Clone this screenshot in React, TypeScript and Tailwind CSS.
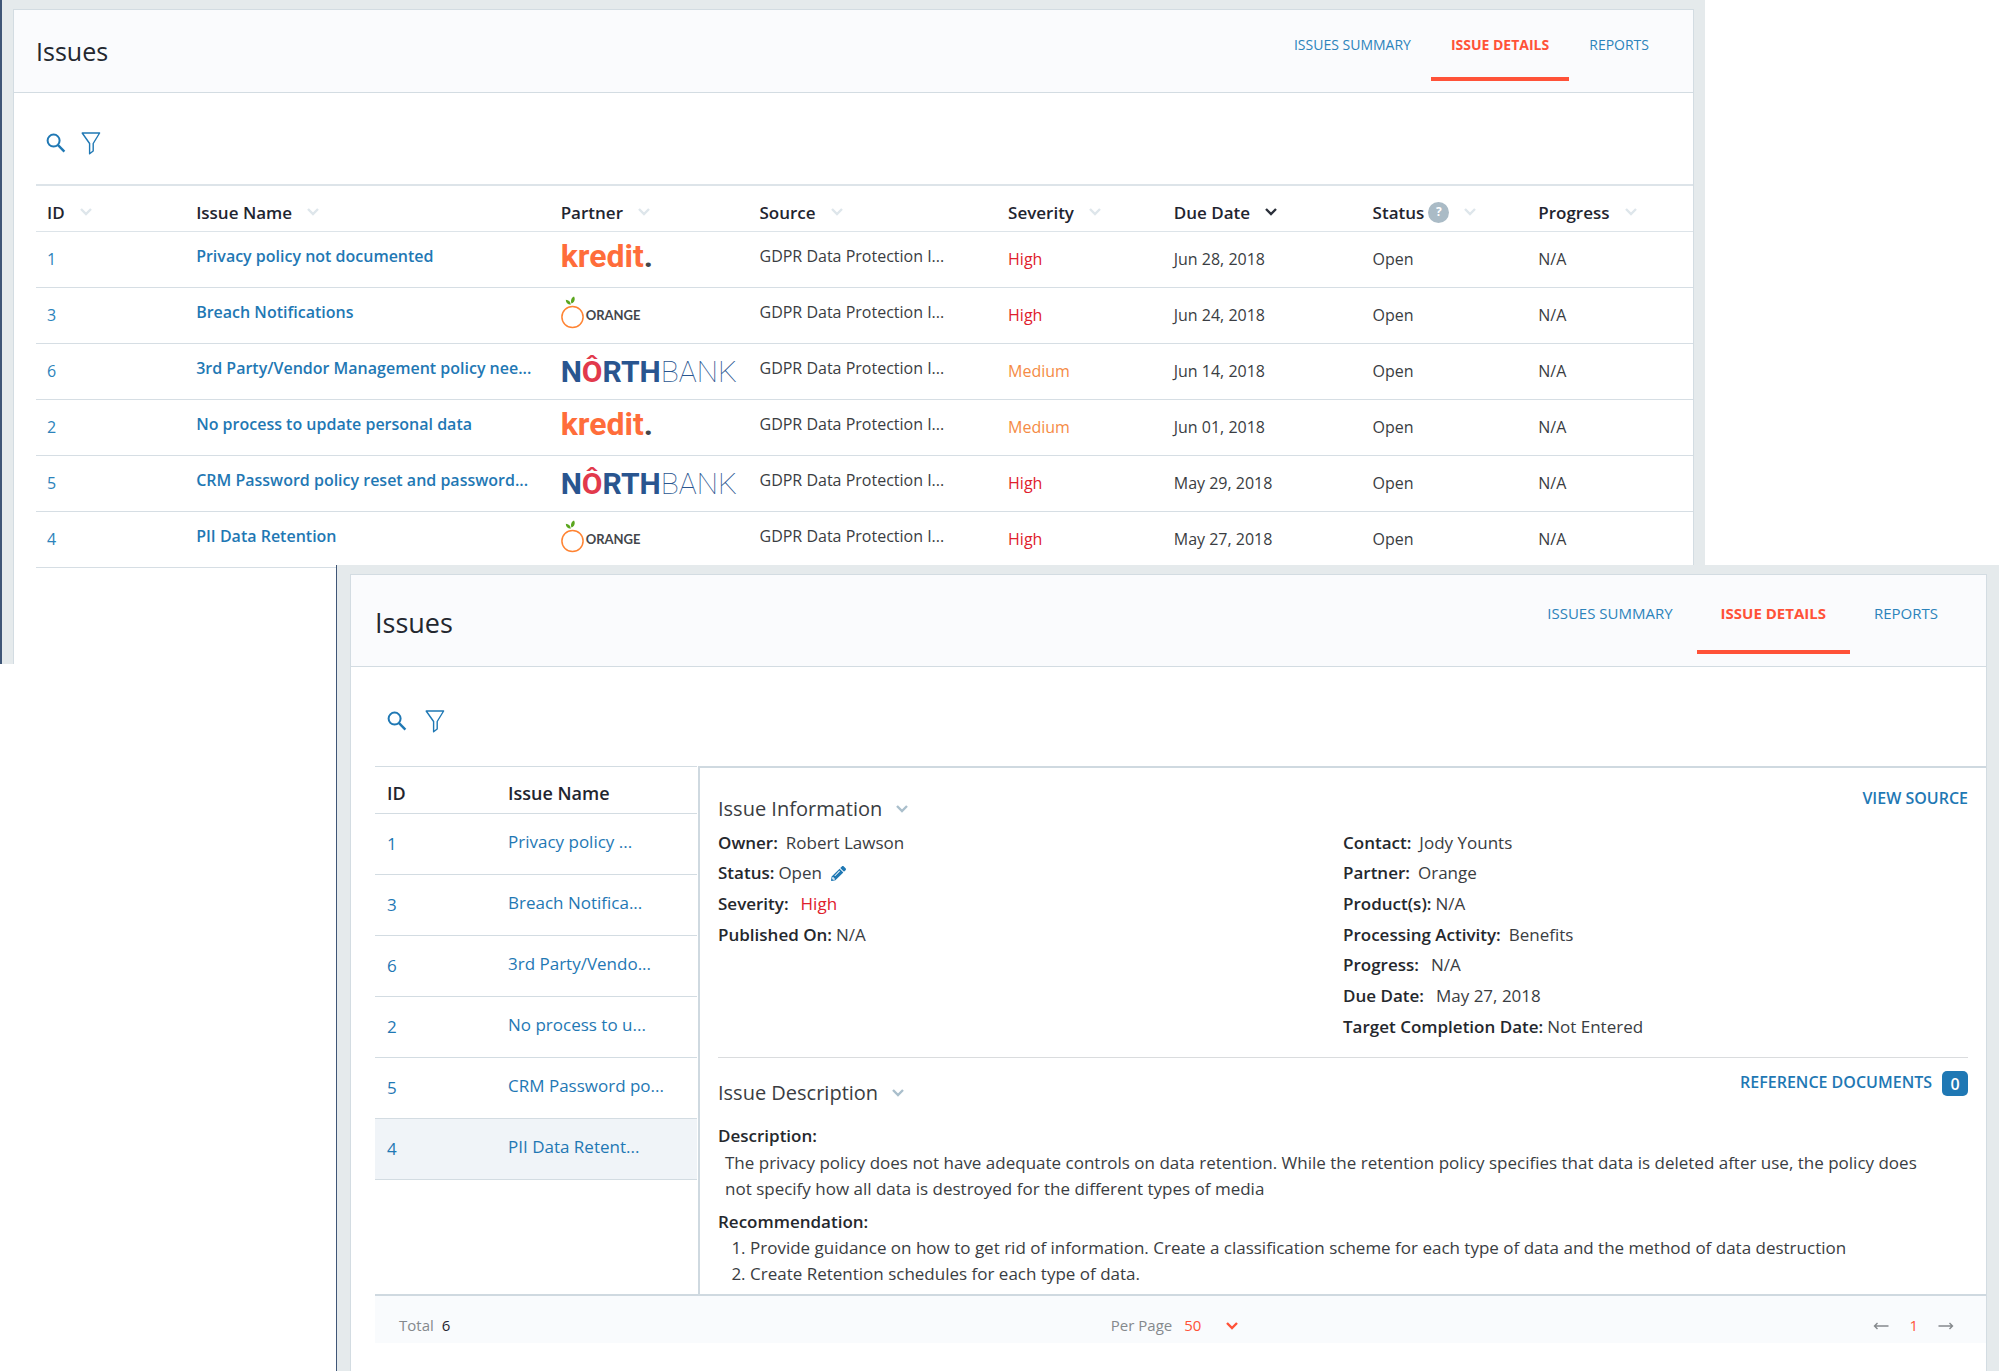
import { FaPencilAlt } from "react-icons/fa";

type Partner = "kredit" | "orange" | "northbank";

const issues: { id: number; name: string; short: string; partner: Partner; severity: string; due: string }[] = [
    { id: 1, name: "Privacy policy not documented", short: "Privacy policy ...", partner: "kredit", severity: "High", due: "Jun 28, 2018" },
    { id: 3, name: "Breach Notifications", short: "Breach Notifica...", partner: "orange", severity: "High", due: "Jun 24, 2018" },
    { id: 6, name: "3rd Party/Vendor Management policy nee...", short: "3rd Party/Vendo...", partner: "northbank", severity: "Medium", due: "Jun 14, 2018" },
    { id: 2, name: "No process to update personal data", short: "No process to u...", partner: "kredit", severity: "Medium", due: "Jun 01, 2018" },
    { id: 5, name: "CRM Password policy reset and password...", short: "CRM Password po...", partner: "northbank", severity: "High", due: "May 29, 2018" },
    { id: 4, name: "PII Data Retention", short: "PII Data Retent...", partner: "orange", severity: "High", due: "May 27, 2018" },
];

const columns = [
    { label: "ID", width: "w-[9%]" },
    { label: "Issue Name", width: "w-[22%]" },
    { label: "Partner", width: "w-[12%]" },
    { label: "Source", width: "w-[15%]" },
    { label: "Severity", width: "w-[10%]" },
    { label: "Due Date", width: "w-[12%]", active: true },
    { label: "Status", width: "w-[10%]", help: true },
    { label: "Progress", width: "w-[10%]" },
];

const leftFields = [
    { label: "Owner:", value: "Robert Lawson", gap: "ml-2" },
    { label: "Status:", value: "Open", gap: "ml-1", editable: true },
    { label: "Severity:", value: "High", gap: "ml-3 text-[#e0202c]" },
    { label: "Published On:", value: "N/A", gap: "ml-1" },
];

const rightFields = [
    { label: "Contact:", value: "Jody Younts", gap: "ml-2" },
    { label: "Partner:", value: "Orange", gap: "ml-2" },
    { label: "Product(s):", value: "N/A", gap: "ml-1" },
    { label: "Processing Activity:", value: "Benefits", gap: "ml-2" },
    { label: "Progress:", value: "N/A", gap: "ml-3" },
    { label: "Due Date:", value: "May 27, 2018", gap: "ml-3" },
    { label: "Target Completion Date:", value: "Not Entered", gap: "ml-1" },
];

function Chevron({ className }: { className: string }) {
    return (
        <svg viewBox="0 0 12 8" className={className} fill="none" stroke="currentColor" strokeWidth="2.4">
            <path d="M1 1l5 5 5-5" />
        </svg>
    );
}

function SearchIcon() {
    return (
        <svg viewBox="0 0 20 20" className="size-5" fill="none" stroke="currentColor">
            <circle cx="7.6" cy="7.6" r="6" strokeWidth="2" />
            <path d="M11.8 11.8l6.6 6.8" strokeWidth="2.4" />
        </svg>
    );
}

function FunnelIcon() {
    return (
        <svg viewBox="0 0 20 24" className="h-6 w-5" fill="none" stroke="currentColor" strokeWidth="1.4" strokeLinejoin="round">
            <path d="M1.2 2h17.4l-6.4 10.5V20l-3.6 2.8V12.5z" />
        </svg>
    );
}

function Arrow({ flip = false }: { flip?: boolean }) {
    return (
        <svg viewBox="0 0 16 10" className={flip ? "h-[10px] w-4 rotate-180" : "h-[10px] w-4"} fill="none" stroke="currentColor" strokeWidth="1.4">
            <path d="M15.5 5H1.5M4.5 2l-3 3 3 3" />
        </svg>
    );
}

function PartnerLogo({ name }: { name: Partner }) {
    if (name === "kredit") {
        return (
            <span className="block font-[Roboto,sans-serif] text-[32px] leading-[40px] font-bold text-[#ff6d3a]">
                kredit<span className="text-[#43464b]">.</span>
            </span>
        );
    }
    if (name === "orange") {
        return (
            <span className="flex items-end gap-[2px]">
                <svg viewBox="0 0 23 33" className="h-[33px] w-[23px]" fill="none">
                    <circle cx="11.5" cy="21" r="10.6" stroke="#ff8433" strokeWidth="1.5" />
                    <path d="M9.7 8.8C6.5 8.6 4.8 6.7 4.8 3.8c3 .2 5 2 4.900 5z" fill="#5aa61e" />
                    <path d="M10.5 7.5c-1.3-3 .1-6 2.5-7 1.5 2.6.6 5.8-2.5 7z" fill="#5aa61e" />
                </svg>
                <span className="pb-[6px] font-[Lato,sans-serif] text-[13px] leading-4 font-bold text-[#43464b]">ORANGE</span>
            </span>
        );
    }
    return (
        <span className="block pt-2 font-[Roboto,sans-serif] text-[30px] leading-[40px] font-bold text-[#29558f]">
            N<span className="text-[#e23a4c]">Ô</span>RTH<span className="font-thin">BANK</span>
        </span>
    );
}

function Tabs({ large = false }: { large?: boolean }) {
    const box = large ? "h-[79px] px-6 pt-[26px] text-[15px] leading-6" : "h-[71px] px-5 pt-[23px] text-[14px] leading-6";
    return (
        <nav className="mr-6 flex">
            <a href="#summary" className={`${box} text-[#2c83bb]`}>ISSUES SUMMARY</a>
            <a href="#details" aria-current="page" className={`${box} border-b-4 border-[#ff5238] font-bold text-[#ff5238]`}>ISSUE DETAILS</a>
            <a href="#reports" className={`${box} text-[#2c83bb]`}>REPORTS</a>
        </nav>
    );
}

function Toolbar({ className }: { className: string }) {
    return (
        <div className={className}>
            <button type="button" aria-label="Search"><SearchIcon /></button>
            <button type="button" aria-label="Filter"><FunnelIcon /></button>
        </div>
    );
}

function Field({ label, value, gap, editable }: { label: string; value: string; gap: string; editable?: boolean }) {
    return (
        <div className="flex items-center">
            <dt className="font-semibold text-[#25282d]">{label}</dt>
            <dd className={gap}>{value}</dd>
            {editable && (
                <button type="button" aria-label="Edit status" className="ml-[9px] text-[#1f78b4]">
                    <FaPencilAlt className="size-[15px]" />
                </button>
            )}
        </div>
    );
}

function IssueListWindow() {
    return (
        <section className="mr-[294px] h-[664px] border-l-2 border-[#3f5677] bg-[#e5eaec] pt-[9px] pr-[11px] pl-[11px]">
            <div className="h-full border border-b-0 border-[#d3dce2] bg-white">
                <header className="flex h-[83px] items-start justify-between border-b border-[#d3dce2] bg-[#fafbfd]">
                    <h1 className="pt-[25px] pl-[22px] text-[25px] leading-8 text-[#23272f]">Issues</h1>
                    <Tabs />
                </header>
                <Toolbar className="flex h-[91px] items-center gap-[15px] pt-2 pl-8 text-[#1f78b4]" />
                <div className="pl-[22px]">
                    <table className="w-full table-fixed text-left text-[16px]">
                        <thead>
                            <tr className="h-[46px] border-t-2 border-b border-[#dde4e9]">
                                {columns.map((c) => (
                                    <th key={c.label} className={`${c.width} pt-2 pl-[11px] text-[17px] font-semibold text-[#1f2530]`}>
                                        <button type="button" className="flex items-center">
                                            {c.label}
                                            {c.help && (
                                                <span className="ml-1 flex size-[21px] items-center justify-center rounded-full bg-[#aabbc6] text-[12px] font-bold text-white">?</span>
                                            )}
                                            <Chevron className={c.active ? "ml-[15px] h-2 w-3 text-[#2b303a]" : "ml-[15px] h-2 w-3 text-[#dee6eb]"} />
                                        </button>
                                    </th>
                                ))}
                            </tr>
                        </thead>
                        <tbody>
                            {issues.map((issue) => (
                                <tr key={issue.id} className="h-14 border-b border-[#d6dee4]">
                                    <td className="pl-[11px]"><a href={`#issue-${issue.id}`} className="text-[#2c83bb]">{issue.id}</a></td>
                                    <td className="pb-[6px] pl-[11px] whitespace-nowrap"><a href={`#issue-${issue.id}`} className="font-semibold text-[#1f78b4]">{issue.name}</a></td>
                                    <td className="pb-[6px] pl-[11px] whitespace-nowrap"><PartnerLogo name={issue.partner} /></td>
                                    <td className="pb-[6px] pl-[11px] whitespace-nowrap">GDPR Data Protection I...</td>
                                    <td className={issue.severity === "High" ? "pl-[11px] text-[#e0202c]" : "pl-[11px] text-[#f58b45]"}>{issue.severity}</td>
                                    <td className="pl-[11px]">{issue.due}</td>
                                    <td className="pl-[11px]">Open</td>
                                    <td className="pl-[11px]">N/A</td>
                                </tr>
                            ))}
                        </tbody>
                    </table>
                </div>
            </div>
        </section>
    );
}

function IssueDetailWindow() {
    return (
        <section className="relative -mt-[99px] ml-[336px] border-l border-[#3f5677] bg-[#e5eaec] pt-[9px] pr-3 pl-[13px] text-[17px]">
            <div className="min-h-[797px] border border-b-0 border-[#d3dce2] bg-white">
                <header className="flex h-[92px] items-start justify-between border-b border-[#d3dce2] bg-[#fafbfd]">
                    <h1 className="pt-8 pl-6 text-[27px] leading-8 text-[#23272f]">Issues</h1>
                    <Tabs large />
                </header>
                <Toolbar className="flex h-[99px] items-center gap-[18px] pt-2 pl-9 text-[#1f78b4]" />

                <div className="flex h-[528px] gap-px overflow-hidden pl-6">
                    <div className="w-[322px] shrink-0">
                        <table className="w-full table-fixed text-left">
                            <thead>
                                <tr className="h-[47px] border-y border-[#d3dce2] text-[18px] text-[#1f2530]">
                                    <th className="w-[121px] pt-[6px] pl-3 font-semibold">ID</th>
                                    <th className="pt-[6px] pl-3 font-semibold">Issue Name</th>
                                </tr>
                            </thead>
                            <tbody>
                                {issues.map((issue) => (
                                    <tr key={issue.id} className={issue.id === 4 ? "h-[61px] border-b border-[#d3dce2] bg-[#f0f4f8]" : "h-[61px] border-b border-[#d3dce2]"}>
                                        <td className="pl-3"><a href={`#detail-${issue.id}`} className="text-[#1f78b4]">{issue.id}</a></td>
                                        <td className="pb-1 pl-3 whitespace-nowrap"><a href={`#detail-${issue.id}`} className="text-[#1f78b4]">{issue.short}</a></td>
                                    </tr>
                                ))}
                            </tbody>
                        </table>
                    </div>

                    <div className="flex-1 border-t-2 border-l-2 border-[#cfd9e0] px-[18px]">
                        <div className="flex h-[59px] items-start justify-between">
                            <h2 className="flex items-center pt-[27px] text-[20px] leading-7">
                                Issue Information
                                <Chevron className="ml-[14px] h-2 w-3 text-[#aabfcc]" />
                            </h2>
                            <a href="#source" className="pt-[18px] text-[16px] leading-6 font-semibold text-[#1f78b4]">VIEW SOURCE</a>
                        </div>
                        <div className="grid grid-cols-2 border-b border-[#dadcde] pb-[15px]">
                            <dl className="grid h-[215px] grid-rows-7">
                                {leftFields.map((f) => <Field key={f.label} {...f} />)}
                            </dl>
                            <dl className="grid h-[215px] grid-rows-7">
                                {rightFields.map((f) => <Field key={f.label} {...f} />)}
                            </dl>
                        </div>
                        <div className="flex h-[65px] items-start justify-between">
                            <h2 className="flex items-center pt-[21px] text-[20px] leading-7">
                                Issue Description
                                <Chevron className="ml-[14px] h-2 w-3 text-[#aabfcc]" />
                            </h2>
                            <div className="flex items-start gap-[10px] pt-3">
                                <a href="#documents" className="text-[16px] leading-6 font-semibold text-[#1f78b4]">REFERENCE DOCUMENTS</a>
                                <span className="mt-px flex h-[25px] w-[26px] items-center justify-center rounded-[5px] bg-[#1f78b4] text-[16px] font-semibold text-white">0</span>
                            </div>
                        </div>
                        <h3 className="leading-[26px] font-semibold text-[#25282d]">Description:</h3>
                        <p className="mt-px pr-6 pl-[7px] leading-[26px]">
                            The privacy policy does not have adequate controls on data retention. While the retention policy specifies that data is deleted after use, the policy does not specify how all data is destroyed for the different types of media
                        </p>
                        <h3 className="mt-[7px] leading-[26px] font-semibold text-[#25282d]">Recommendation:</h3>
                        <ol className="list-decimal pl-8 leading-[26px]">
                            <li>Provide guidance on how to get rid of information. Create a classification scheme for each type of data and the method of data destruction</li>
                            <li>Create Retention schedules for each type of data.</li>
                            <li>Audit data minimization</li>
                        </ol>
                    </div>
                </div>

                <div className="pl-6">
                    <footer className="grid h-[49px] grid-cols-3 items-center border-t-2 border-[#cfd9e0] bg-[#f9fbfd] pt-3 text-[15px] text-[#85898d]">
                        <div className="pl-6">
                            Total <span className="ml-1 text-[#1f2530]">6</span>
                        </div>
                        <div className="flex items-center justify-center pr-3">
                            <label htmlFor="per-page">Per Page</label>
                            <div className="relative ml-3 flex items-center text-[#ff5238]">
                                <select id="per-page" defaultValue="50" className="w-[54px] appearance-none bg-transparent">
                                    <option>50</option>
                                </select>
                                <Chevron className="pointer-events-none absolute right-0 h-2 w-3" />
                            </div>
                        </div>
                        <div className="flex items-center justify-end gap-5 pr-8">
                            <button type="button" aria-label="Previous page"><Arrow /></button>
                            <span className="text-[#ff5238]">1</span>
                            <button type="button" aria-label="Next page"><Arrow flip /></button>
                        </div>
                    </footer>
                </div>
            </div>
        </section>
    );
}

export default function App() {
    return (
        <main className="min-h-screen overflow-hidden bg-white font-['Open_Sans',sans-serif] text-[#3a3d42]">
            <IssueListWindow />
            <IssueDetailWindow />
        </main>
    );
}
